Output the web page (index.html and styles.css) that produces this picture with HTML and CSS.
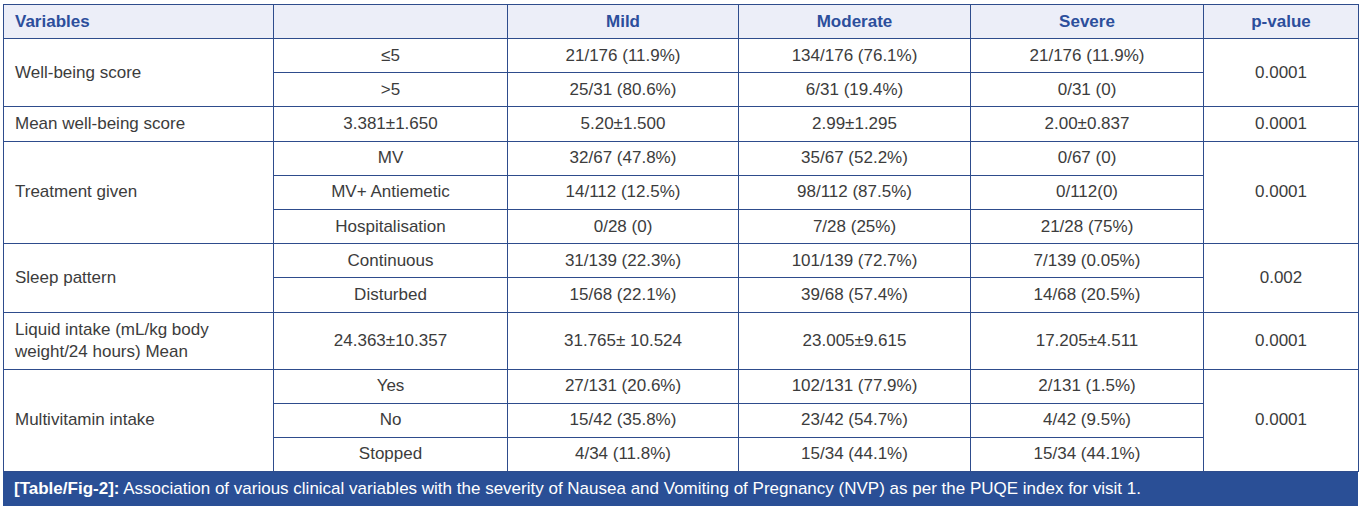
FILE: index.html
```html
<!DOCTYPE html>
<html lang="en">
<head>
<meta charset="utf-8">
<title>Table/Fig-2</title>
<link rel="stylesheet" href="styles.css">
</head>
<body>
<div class="figure">
<table class="data">
  <colgroup>
    <col class="c1"><col class="c2"><col class="c3"><col class="c4"><col class="c5"><col class="c6">
  </colgroup>
  <thead>
    <tr class="head">
      <th class="var">Variables</th>
      <th></th>
      <th>Mild</th>
      <th>Moderate</th>
      <th>Severe</th>
      <th>p-value</th>
    </tr>
  </thead>
  <tbody>
    <tr>
      <td class="var" rowspan="2">Well-being score</td>
      <td>≤5</td><td>21/176 (11.9%)</td><td>134/176 (76.1%)</td><td>21/176 (11.9%)</td>
      <td rowspan="2">0.0001</td>
    </tr>
    <tr>
      <td>&gt;5</td><td>25/31 (80.6%)</td><td>6/31 (19.4%)</td><td>0/31 (0)</td>
    </tr>
    <tr>
      <td class="var">Mean well-being score</td>
      <td>3.381±1.650</td><td>5.20±1.500</td><td>2.99±1.295</td><td>2.00±0.837</td><td>0.0001</td>
    </tr>
    <tr>
      <td class="var" rowspan="3">Treatment given</td>
      <td>MV</td><td>32/67 (47.8%)</td><td>35/67 (52.2%)</td><td>0/67 (0)</td>
      <td rowspan="3">0.0001</td>
    </tr>
    <tr>
      <td>MV+ Antiemetic</td><td>14/112 (12.5%)</td><td>98/112 (87.5%)</td><td>0/112(0)</td>
    </tr>
    <tr>
      <td>Hospitalisation</td><td>0/28 (0)</td><td>7/28 (25%)</td><td>21/28 (75%)</td>
    </tr>
    <tr>
      <td class="var" rowspan="2">Sleep pattern</td>
      <td>Continuous</td><td>31/139 (22.3%)</td><td>101/139 (72.7%)</td><td>7/139 (0.05%)</td>
      <td rowspan="2">0.002</td>
    </tr>
    <tr>
      <td>Disturbed</td><td>15/68 (22.1%)</td><td>39/68 (57.4%)</td><td>14/68 (20.5%)</td>
    </tr>
    <tr class="tall">
      <td class="var">Liquid intake (mL/kg body weight/24 hours) Mean</td>
      <td>24.363±10.357</td><td>31.765± 10.524</td><td>23.005±9.615</td><td>17.205±4.511</td><td>0.0001</td>
    </tr>
    <tr>
      <td class="var" rowspan="3">Multivitamin intake</td>
      <td>Yes</td><td>27/131 (20.6%)</td><td>102/131 (77.9%)</td><td>2/131 (1.5%)</td>
      <td rowspan="3">0.0001</td>
    </tr>
    <tr>
      <td>No</td><td>15/42 (35.8%)</td><td>23/42 (54.7%)</td><td>4/42 (9.5%)</td>
    </tr>
    <tr>
      <td>Stopped</td><td>4/34 (11.8%)</td><td>15/34 (44.1%)</td><td>15/34 (44.1%)</td>
    </tr>
  </tbody>
</table>
<p class="caption"><span class="label">[Table/Fig-2]:</span> Association of various clinical variables with the severity of Nausea and Vomiting of Pregnancy (NVP) as per the PUQE index for visit 1.</p>
</div>
</body>
</html>
```

FILE: styles.css
```css
html, body {
  background: #ffffff;
}
body {
  margin: 4px 0 0 3px;
  font-family: "Liberation Sans", Arial, Helvetica, sans-serif;
  color: #3c3c3c;
}
.figure {
  width: 1355px;
}
.data {
  width: 1355px;
  border-collapse: collapse;
  table-layout: fixed;
  font-size: 17px;
}
.c1 { width: 270px; }
.c2 { width: 234px; }
.c3 { width: 231px; }
.c4 { width: 232px; }
.c5 { width: 233px; }
.c6 { width: 155px; }
.data th,
.data td {
  border: 1px solid #2e4c8c;
  text-align: center;
  vertical-align: middle;
  padding: 0 8px;
  line-height: 22px;
  font-weight: normal;
}
.data th {
  background: #eceef8;
  color: #2c4e9c;
  font-weight: bold;
}
.data tr {
  height: 34.2px;
}
.data tr.head {
  height: 34px;
}
.data tr.tall {
  height: 57px;
}
.data .var {
  text-align: left;
  padding-left: 11px;
}
.caption {
  margin: 0;
  height: 34px;
  line-height: 34px;
  background: #2a4f96;
  color: #ffffff;
  font-size: 17px;
  padding-left: 11px;
  white-space: nowrap;
}
.caption .label {
  font-weight: bold;
}
```
